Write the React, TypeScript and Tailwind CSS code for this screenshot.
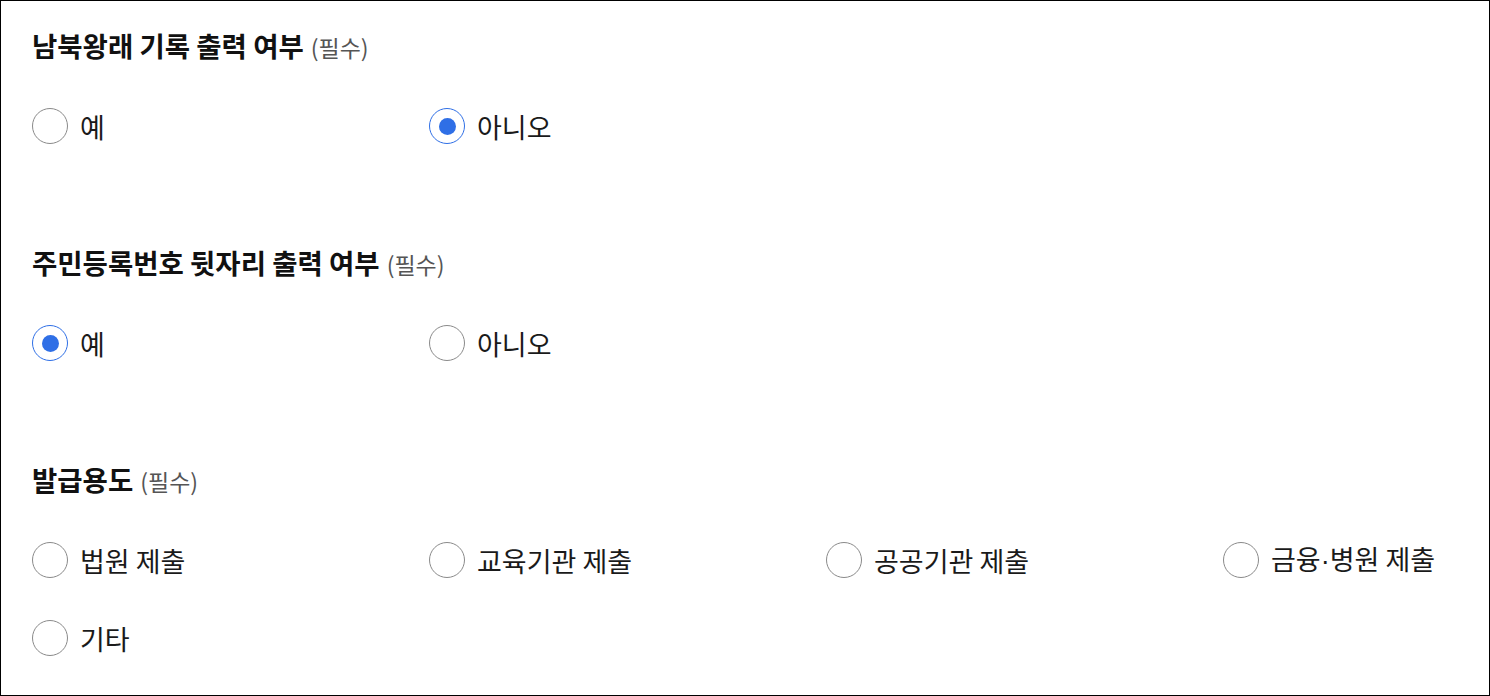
type Option = { label: string; checked?: boolean };

type Section = { title: string; options: Option[] };

const sections: Section[] = [
  {
    title: '남북왕래 기록 출력 여부',
    options: [{ label: '예' }, { label: '아니오', checked: true }],
  },
  {
    title: '주민등록번호 뒷자리 출력 여부',
    options: [{ label: '예', checked: true }, { label: '아니오' }],
  },
  {
    title: '발급용도',
    options: [
      { label: '법원 제출' },
      { label: '교육기관 제출' },
      { label: '공공기관 제출' },
      { label: '금융·병원 제출' },
      { label: '기타' },
    ],
  },
];

function Label({ text }: { text: string }) {
  // keep the middle dot narrow, like the latin glyph
  const parts = text.split('·');
  return (
    <span className="text-[27px] leading-none text-[#1a1a1a]">
      {parts.map((p, i) => (
        <span key={i}>
          {i > 0 && <span style={{ fontFamily: '"Liberation Sans", sans-serif' }}>·</span>}
          {p}
        </span>
      ))}
    </span>
  );
}

function Radio({ label, checked = false }: Option) {
  return (
    <label className="flex items-center gap-3 h-[36px] cursor-pointer">
      <span
        className={
          checked
            ? 'flex items-center justify-center w-[36px] h-[36px] rounded-full border border-[#2f6fe6] bg-white'
            : 'flex items-center justify-center w-[36px] h-[36px] rounded-full border border-[#8a8a8a] bg-white'
        }
      >
        {checked && <span className="w-[17px] h-[17px] rounded-full bg-[#2f6fe6]" />}
      </span>
      <Label text={label} />
    </label>
  );
}

export default function App() {
  return (
    <div
      className="w-[1490px] h-[696px] border border-black bg-white px-[31px] pt-[27px] overflow-hidden"
      style={{ fontFamily: '"Noto Sans CJK KR", "Noto Sans", sans-serif' }}
    >
      <div className="flex flex-col gap-[101px]">
        {sections.map((s) => (
          <section key={s.title}>
            <h2 className="flex items-baseline gap-[7px] h-[34px] leading-[34px]">
              <span className="text-[27.5px] font-bold text-[#111]">{s.title}</span>
              <span className="text-[23px] text-[#555]">(필수)</span>
            </h2>
            <div className="grid grid-cols-[repeat(3,397px)_1fr] gap-y-[42px] mt-[46px]">
              {s.options.map((o) => (
                <Radio key={o.label} {...o} />
              ))}
            </div>
          </section>
        ))}
      </div>
    </div>
  );
}
